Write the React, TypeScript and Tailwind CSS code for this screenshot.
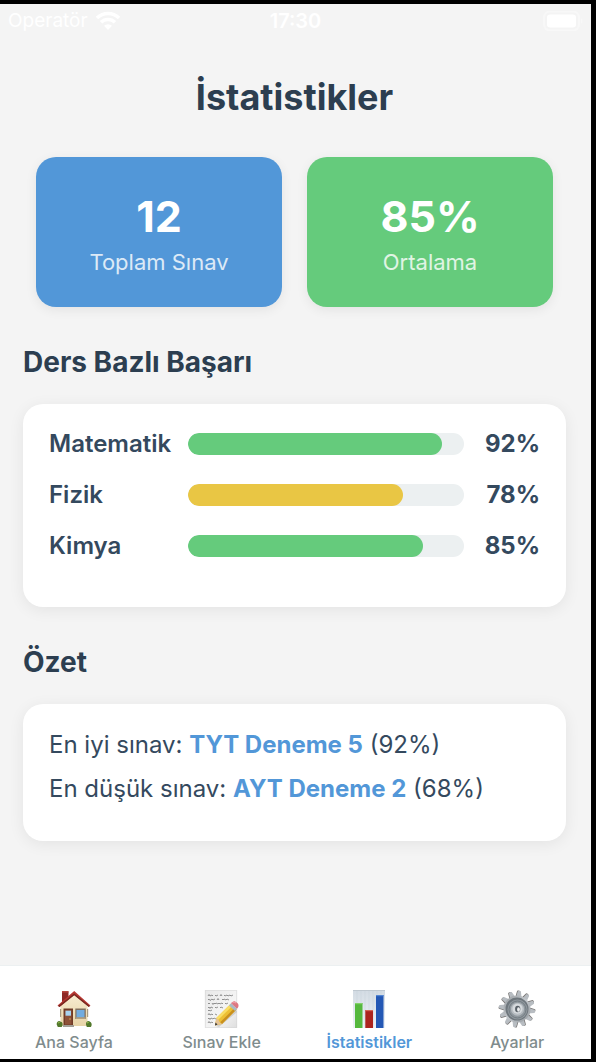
import type { ReactNode } from 'react';

type Lesson = { name: string; score: number; fill: string };

const lessons: Lesson[] = [
  { name: 'Matematik', score: 92, fill: 'bg-[#65cb7c]' },
  { name: 'Fizik', score: 78, fill: 'bg-[#e9c644]' },
  { name: 'Kimya', score: 85, fill: 'bg-[#65cb7c]' },
];

function HouseIcon() {
  return (
    <svg viewBox="0 0 36 38" className="h-[38px] w-9" aria-hidden="true">
      <defs>
        <linearGradient id="wall" x1="0" y1="0" x2="0" y2="1">
          <stop offset="0" stopColor="#f8edd2" />
          <stop offset="1" stopColor="#e8d4a8" />
        </linearGradient>
      </defs>
      <path d="M6 1.5h6.5v8L6 14z" fill="#8f2925" />
      <path d="M6 1h6.5v1.6H6z" fill="#b5443c" />
      <path d="M4.5 15.5 18 3.500l13.500 12V36h-27z" fill="url(#wall)" />
      <path d="M4 19h1.200v8H4zM31 19h1.200v8H31z" fill="#a99a80" />
      <path d="M1.500 15.500 18.200 1l16.300 14.500-1.700 1.300L18.200 5 3.500 17z" fill="#b83832" />
      <path d="m2.200 16 16-12.500L33.800 16l-1 .9L18.200 5.300 3.500 17z" fill="#792820" />
      <path d="M7.500 18.500h9.500V36H7.500z" fill="#713b27" />
      <path d="M9 20h6.500v14.500H9z" fill="#8d5138" />
      <path d="M9.500 20.700h5.500v5H9.500z" fill="#a8d2ef" />
      <circle cx="14" cy="29" r=".7" fill="#e7bc55" />
      <path d="M19.300 18.500h10.500V29H19.300z" fill="#80705f" />
      <path d="M20.500 20h8v7.300h-8z" fill="#72ace0" />
      <path d="M20 27.500h9.500v1.200H20z" fill="#c6b592" />
      <path d="M7 35h11v2H7z" fill="#a2a098" />
      <path d="M.7 34.500c-.3-3 2.500-4.500 4-2.800 2.200 0 2.500 3.500 1 5.300H1.800z" fill="#52782b" />
      <path d="M30 34.500c-.3-3 2.500-4.500 4-2.800 2.200 1 2 4 .8 5.300h-4z" fill="#52782b" />
      <path d="m2 33 1.700-.7M31 33l1.700-.7" stroke="#8fb64a" strokeWidth="1.200" />
    </svg>
  );
}

function NoteIcon() {
  return (
    <svg viewBox="0 0 36 38" className="h-[38px] w-9" aria-hidden="true">
      <defs>
        <linearGradient id="paper" x1="0" y1="0" x2="1" y2="1">
          <stop offset="0" stopColor="#e8e8e8" />
          <stop offset=".6" stopColor="#f5f5f5" />
          <stop offset="1" stopColor="#dedede" />
        </linearGradient>
      </defs>
      <path d="M1 0h32v38H1z" fill="url(#paper)" />
      <path d="M1.300.3h31.400v37.400H1.300z" fill="none" stroke="#d3d3d3" strokeWidth=".6" />
      <g fill="none" stroke="#777" strokeWidth=".8">
        <path d="m4 6 1-1.500 1 1.500 2-1 1 1m2-1 1 1 2-1m2 1 1-1.500 1 1.500m2-1 1 1 2-1 1 1 2-1 1 1 2-1" />
        <path d="m4 10 1-1 1 1.500 2-1.500 1 1 2-1m2 1 1-1.500 1 1.500m3-1 1 1 1-1 2 1 1-1 2 1" />
        <path d="m4 14 1-1 1 1m2-1 1 1.500 1-1.500 1 1 1-1 2 1 1-1 1 1 2-1 1 1m2-1 1 1 2-1" />
        <path d="m4 18 1-1 1 1.500 1-1.500 2 1m2-1 1 1 2-1m2 1 1-1 2 1" />
        <path d="m4 21 1-1 1 1 2-1M4 25l1-1.500 1 1.500 2-1 1 1m2-1 2 1" />
        <path d="m4 29 1-1 1 1.500 1-1.500 2 1 1-1 2 1M4 33l1-1.500 1 1.500 2-1 1 1" />
      </g>
      <path d="m12 36 19-17 2 3-18 15z" fill="#999" opacity=".35" />
      <path d="m11 35.500 1.300-7.500L26.500 14l6 5.500L18 34z" fill="#edbf34" />
      <path d="m12.300 28 14.200-14 2 1.800L14 30z" fill="#f9dd65" />
      <path d="m16.200 32.300 14.500-14.500 1.800 1.700L18 34z" fill="#c9901f" />
      <path d="m11 35.500 1.300-7.500 2 1.800 1.500 2.500L18 34z" fill="#e4c394" />
      <path d="m11 35.500.5-3 2 2z" fill="#343434" />
      <path d="m25 15.500 2-2.200 6 5.500-2 2.200z" fill="#a9bac4" />
      <path d="M27 13.300c1-1.500 2.700-2.700 4.200-1.900 2.300 1 3.700 3 3.300 4.500-.2 1.300-1 2.100-1.500 2.900z" fill="#dd7882" />
      <path d="M28.500 12.800c1.200-1 2.500-.7 3.500.4" fill="none" stroke="#f5adb4" strokeWidth="1" />
    </svg>
  );
}

function ChartIcon() {
  return (
    <svg viewBox="0 0 36 38" className="h-[38px] w-9" aria-hidden="true">
      <defs>
        <linearGradient id="board" x1="0" y1="0" x2="0" y2="1">
          <stop offset="0" stopColor="#d3dbe3" />
          <stop offset="1" stopColor="#eef3f8" />
        </linearGradient>
      </defs>
      <path d="M2 0h32v38H2z" fill="url(#board)" />
      <path d="M6 0v38M10 0v38M14 0v38M18 0v38M22 0v38M26 0v38M30 0v38" stroke="#c5d0da" strokeWidth=".5" />
      <path d="M2 .5h32" stroke="#bfc8d0" />
      <path d="M4 13h7.500v25H4z" fill="#55b83d" />
      <path d="M4 13h7.500v1.200H4z" fill="#83d169" />
      <path d="M14.300 20H22v18h-7.700z" fill="#ac241e" />
      <path d="M14.300 20H22v1.200h-7.700z" fill="#d46355" />
      <path d="M25 5h7.500v33H25z" fill="#2458b5" />
      <path d="M25 5h7.500v1.200H25z" fill="#5487d3" />
    </svg>
  );
}

function GearIcon() {
  const teeth = Array.from({ length: 12 }, (_, i) => i * 30 + 8);
  return (
    <svg viewBox="0 0 38 38" className="size-[38px]" aria-hidden="true">
      <defs>
        <linearGradient id="steel" x1="0" y1="0" x2="1" y2="1">
          <stop offset="0" stopColor="#979ca0" />
          <stop offset=".5" stopColor="#c4c8cc" />
          <stop offset="1" stopColor="#90969b" />
        </linearGradient>
      </defs>
      {teeth.map((angle) => (
        <g key={angle} transform={`rotate(${angle} 19 19)`}>
          <path d="M15.800 7 16.600 1q1.400-1 3.200 0l1 6z" fill="#74716f" />
          <path d="M16.600 7.500 17.200 1.300q1.500-1.200 3.300 0l1.500 6.200z" fill="#b8bdc2" />
        </g>
      ))}
      <circle cx="19" cy="19" r="13.500" fill="url(#steel)" />
      <circle cx="19" cy="19" r="11.500" fill="#6f777d" />
      <circle cx="19.500" cy="19.500" r="10" fill="#90989e" />
      <circle cx="19.500" cy="19.500" r="8.500" fill="none" stroke="#737c82" />
      <circle cx="19.500" cy="19.200" r="6.500" fill="#b7bdc2" />
      <circle cx="19.500" cy="18.800" r="5" fill="#d7dbde" />
      <ellipse cx="19.700" cy="19" rx="2.600" ry="3.300" fill="#596168" />
      <ellipse cx="20.500" cy="19.500" rx="1.400" ry="2.200" fill="#eceeef" />
    </svg>
  );
}

function StatusBar() {
  return (
    <header className="grid h-[34px] grid-cols-3 items-center px-2 text-[19px] text-white">
      <div className="flex items-center gap-2">
        <span>Operatör</span>
        <svg viewBox="0 0 24 20" className="h-5 w-6" aria-label="Wi-Fi">
          <path d="M1 7a16 16 0 0 1 22 0M5 11.300a10 10 0 0 1 14 0" fill="none" stroke="white" strokeWidth="3.500" />
          <path d="M8 14.800a5.800 5.800 0 0 1 8 0L12 19z" fill="white" />
        </svg>
      </div>
      <time className="text-center text-xl font-semibold">17:30</time>
      <svg viewBox="0 0 40 20" className="h-5 w-10 justify-self-end" aria-label="Pil">
        <rect x="1" y=".5" width="35" height="19" rx="6" fill="none" stroke="#f8f8f8" strokeWidth="2" />
        <rect x="4" y="3.500" width="29" height="13" rx="3" fill="white" />
        <path d="M38 7q3 3 0 6z" fill="#f8f8f8" />
      </svg>
    </header>
  );
}

function StatCard({ value, label, color }: { value: string; label: string; color: string }) {
  return (
    <div className={`flex flex-1 flex-col items-center rounded-[20px] px-4 pt-8 pb-[30px] text-white shadow-[0_3px_12px_rgba(0,0,0,0.07)] ${color}`}>
      <strong className="text-[43px] leading-[54px] font-bold">{value}</strong>
      <span className="mt-1 text-[22px] leading-[30px] opacity-80">{label}</span>
    </div>
  );
}

function Section({ title, children }: { title: string; children: ReactNode }) {
  return (
    <section className="mt-[37px]">
      <h2 className="text-[28px] leading-9 font-bold text-[#2c3e50]">{title}</h2>
      <div className="mt-6 rounded-[20px] bg-white px-[26px] shadow-[0_3px_16px_rgba(0,0,0,0.07)]">{children}</div>
    </section>
  );
}

function Tab({ label, active, children }: { label: string; active?: boolean; children: ReactNode }) {
  return (
    <a
      href="#"
      aria-current={active ? 'page' : undefined}
      className={`flex flex-1 flex-col items-center gap-1 text-base leading-5 ${active ? 'font-semibold text-[#5297d8]' : 'font-medium text-[#7f8c8d]'}`}
    >
      {children}
      <span>{label}</span>
    </a>
  );
}

export default function App() {
  return (
    <div className="flex min-h-screen flex-col border-t-4 border-r-[5px] border-b-[3px] border-black bg-[#f4f4f4] font-['Inter','Liberation_Sans',sans-serif]">
      <StatusBar />
      <main className="flex-1 pr-[25px] pb-8 pl-[23px]">
        <h1 className="pt-[34px] text-center text-4xl leading-[50px] font-bold text-[#2c3e50]">İstatistikler</h1>
        <div className="mx-[13px] mt-[35px] flex gap-[25px]">
          <StatCard value="12" label="Toplam Sınav" color="bg-[#5297d8]" />
          <StatCard value="85%" label="Ortalama" color="bg-[#65cb7c]" />
        </div>

        <Section title="Ders Bazlı Başarı">
          <ul className="flex flex-col gap-[21px] pt-[25px] pb-[46px]">
            {lessons.map(({ name, score, fill }) => (
              <li key={name} className="flex items-center text-2xl leading-[30px] font-semibold text-[#34495e]">
                <span className="w-[139px] shrink-0">{name}</span>
                <div
                  role="progressbar"
                  aria-label={name}
                  aria-valuenow={score}
                  aria-valuemin={0}
                  aria-valuemax={100}
                  className="h-[22px] flex-1 overflow-hidden rounded-full bg-[#ecf0f1]"
                >
                  <div className={`h-full rounded-full ${fill}`} style={{ width: `${score}%` }} />
                </div>
                <span className="w-[76px] shrink-0 text-right font-bold text-[#34495e]">{score}%</span>
              </li>
            ))}
          </ul>
        </Section>

        <Section title="Özet">
          <div className="flex flex-col gap-2 pt-[23px] pb-[34px] text-2xl leading-9 text-[#34495e]">
            <p>
              En iyi sınav: <strong className="font-bold text-[#5297d8]">TYT Deneme 5</strong> (92%)
            </p>
            <p>
              En düşük sınav: <strong className="font-bold text-[#5297d8]">AYT Deneme 2</strong> (68%)
            </p>
          </div>
        </Section>
      </main>

      <nav aria-label="Sekmeler" className="flex border-t border-[#ecf0f1] bg-white pt-6 pb-[7px]">
        <Tab label="Ana Sayfa">
          <HouseIcon />
        </Tab>
        <Tab label="Sınav Ekle">
          <NoteIcon />
        </Tab>
        <Tab label="İstatistikler" active>
          <ChartIcon />
        </Tab>
        <Tab label="Ayarlar">
          <GearIcon />
        </Tab>
      </nav>
    </div>
  );
}
